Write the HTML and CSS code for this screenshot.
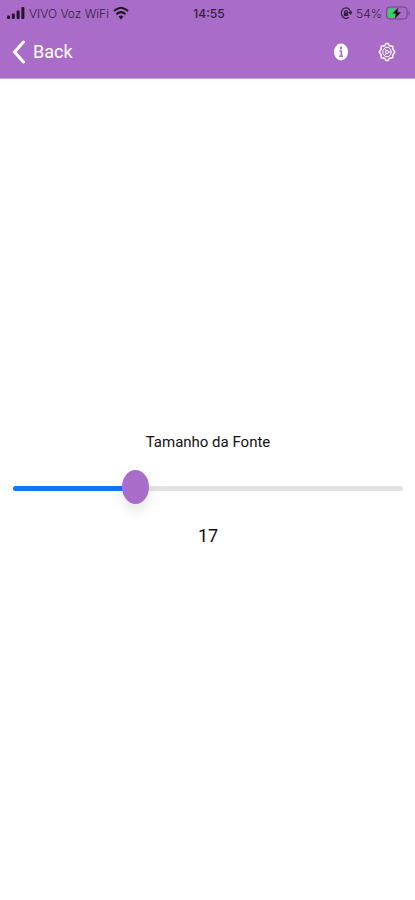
FILE: index.html
```html
<!DOCTYPE html>
<html lang="pt-BR">
<head>
<meta charset="utf-8">
<meta name="viewport" content="width=device-width, initial-scale=1">
<title>Tamanho da Fonte</title>
<link rel="stylesheet" href="styles.css">
</head>
<body>
<header class="top">
  <div class="status">
    <div class="status-side">
      <svg class="signal" viewBox="0 0 18 14" width="18" height="14" aria-hidden="true">
        <rect x="0" y="9.500" width="3" height="3.500" rx="1"/><rect x="4.800" y="7.500" width="3" height="5.500" rx="1"/><rect x="9.600" y="4.500" width="3" height="8.500" rx="1"/><rect x="14.400" y="1" width="3" height="12" rx="1"/>
      </svg>
      <span class="carrier">VIVO Voz WiFi</span>
      <svg class="wifi" viewBox="0 0 16 14" width="16" height="14" aria-hidden="true">
        <path d="M1 5Q8-1.500 15 5M3.500 8.200Q8 4 12.500 8.200"/><path class="solid" d="M5.600 10.500Q8 8.500 10.400 10.500L8 13.500Z"/>
      </svg>
    </div>
    <time class="clock">14:55</time>
    <div class="status-side status-end">
      <svg class="lock" viewBox="0 0 12 14" width="12" height="14" aria-hidden="true">
        <path d="M8.800 11.200A4.600 5.200 0 1 1 10.600 7M8.800 6L10.600 8L12 5.500M4.600 7V5.600Q6 3.700 7.400 5.600V7"/><rect x="3.800" y="6.500" width="4.400" height="3.500"/>
      </svg>
      <span class="charge">54%</span>
      <svg class="battery" viewBox="0 0 25 14" width="25" height="14" aria-hidden="true">
        <rect class="level" x="2" y="2.500" width="7" height="9"/>
        <rect class="shell" x=".6" y="1" width="20.500" height="12" rx="3"/>
        <path class="tip" d="M22.700 4.500Q25 7 22.700 9.500Z"/>
        <path class="bolt" d="M12.500 1.500L6.500 7.500H10L8.600 12.700L15 6.300H11.300Z"/>
      </svg>
    </div>
  </div>
  <nav class="bar">
    <a class="back" href="#">
      <svg viewBox="0 0 14 24" width="14" height="24" aria-hidden="true"><path d="M11.500 2L2.500 12L11.500 22"/></svg>
      <span>Back</span>
    </a>
    <div class="actions">
      <button class="action" type="button" aria-label="Informações">
        <svg viewBox="0 0 18 20" width="18" height="20" aria-hidden="true">
          <ellipse class="disc" cx="9" cy="10" rx="7" ry="8.500"/><ellipse class="ink" cx="9" cy="6" rx="1.200" ry="1.400"/><path class="stem" d="M7.500 9H9.300V14M7.200 14.200H11"/>
        </svg>
      </button>
      <button class="action" type="button" aria-label="Configurações">
        <svg class="gear" viewBox="0 0 18 20" width="18" height="20" aria-hidden="true">
          <path d="M7.800 1.500H10.200L11.200 3.800L14.600 4.200L15 7.400L16.800 10L15 12.600L14.600 15.800L11.200 16.200L10.200 18.500H7.800L6.800 16.200L3.400 15.800L3 12.600L1.200 10L3 7.400L3.400 4.200L6.800 3.800Z"/>
          <ellipse class="thin" cx="9" cy="10" rx="4.200" ry="4.800"/><ellipse class="thin" cx="9" cy="10" rx="1.400" ry="1.700"/>
          <path class="thin" d="M6.400 6.200L8.200 8.700M6.400 13.800L8.200 11.300M10.400 10H13.200"/>
        </svg>
      </button>
    </div>
  </nav>
</header>
<main class="panel">
  <label class="title" for="size">Tamanho da Fonte</label>
  <input class="slider" id="size" type="range" min="8" max="38" value="17">
  <output class="value" for="size">17</output>
</main>
</body>
</html>
```
FILE: styles.css
```css
* { box-sizing: border-box; }

body {
  margin: 0;
  min-height: 100vh;
  display: flex;
  flex-direction: column;
  background: #fff;
  color: #111;
  font-family: Roboto, "Liberation Sans", sans-serif;
}

.top {
  background: #a96cc8;
  color: #fff;
  border-bottom: 1px solid #c9a5da;
}

.status {
  display: grid;
  grid-template-columns: 1fr auto 1fr;
  align-items: center;
  height: 26px;
  padding: 0 4px 0 7px;
  color: #35203f;
  font-size: 12px;
}

.status-side { display: flex; align-items: center; gap: 4px; }
.status-end { justify-content: flex-end; }
.carrier, .charge { font-family: Inter, "Liberation Sans", sans-serif; font-weight: 300; }
.clock { font-family: Inter, "Liberation Sans", sans-serif; font-weight: 500; }

.signal { fill: #24132d; }
.wifi { fill: none; stroke: #1d0f24; stroke-width: 2; }
.wifi .solid { fill: #1d0f24; stroke: none; }
.lock { fill: none; stroke: #35203f; stroke-width: 1.2; }
.lock rect { fill: #35203f; stroke: none; }
.battery .level { fill: #35d35f; }
.battery .shell { fill: none; stroke: #714687; }
.battery .tip { fill: #714687; }
.battery .bolt { fill: #111; }

.bar {
  display: flex;
  align-items: center;
  justify-content: space-between;
  height: 52px;
  padding: 0 19px 0 12px;
}

.back {
  display: flex;
  align-items: center;
  gap: 7px;
  color: #fff;
  font-size: 18px;
  line-height: 24px;
  text-decoration: none;
}
.back svg { fill: none; stroke: #fff; stroke-width: 3; stroke-linecap: round; }

.actions { display: flex; gap: 28px; }
.action { display: flex; padding: 0; border: 0; background: none; color: #fff; }
.disc { fill: #fff; }
.ink { fill: #a96cc8; }
.stem { fill: none; stroke: #a96cc8; stroke-width: 1.5; }
.gear { fill: none; stroke: #fff; stroke-width: 1.5; stroke-linejoin: round; }
.gear .thin { stroke-width: 1; }

.panel {
  flex: 1;
  display: flex;
  flex-direction: column;
  align-items: center;
  justify-content: center;
  padding: 0 12px 0 13px;
}

.title { font-size: 15px; line-height: 20px; }

.slider {
  appearance: none;
  width: 100%;
  height: 34px;
  margin: 20px 0 18px;
  background: none;
}
.slider::-webkit-slider-runnable-track {
  height: 5px;
  border-radius: 3px;
  background: linear-gradient(to right, #1473f8 31%, #e2e2e2 31%);
}
.slider::-webkit-slider-thumb {
  appearance: none;
  width: 27px;
  height: 34px;
  margin-top: -16px;
  border-radius: 50%;
  background: #a96cc8;
  box-shadow: 0 7px 12px rgba(0, 0, 0, 0.1);
}

.value { font-size: 18px; line-height: 24px; }
```
